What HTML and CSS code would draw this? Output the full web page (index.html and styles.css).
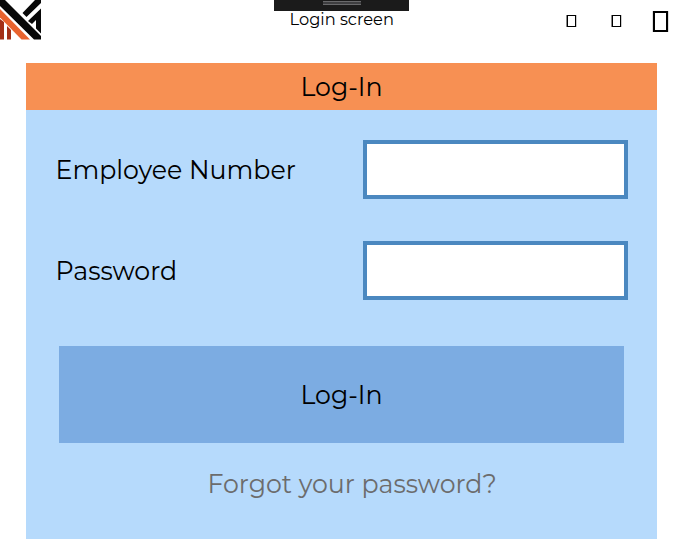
FILE: index.html
```html
<!DOCTYPE html>
<html lang="en">
<head>
<meta charset="utf-8">
<title>Login screen</title>
<link rel="stylesheet" href="styles.css">
</head>
<body>
<header class="titlebar">
  <svg class="logo" viewBox="0 0 42 40" aria-hidden="true">
    <path class="logo-rust" d="M0 19L4 22V39.500H0ZM7 26L11 30V39.500H7Z"/>
    <path class="logo-orange" d="M0 9L30 39.500H21.500L0 17.500Z"/>
    <path class="logo-black" d="M0 0H5L41 36V39.500H34L0 6ZM35 0H41V3L26.500 17L22.500 13ZM41 8.500V33.500L36 28.500V20L32 24L28 21Z"/>
  </svg>
  <div class="heading">
    <div class="grip"><span class="grip-lines"></span></div>
    <span class="heading-text">Login screen</span>
  </div>
  <div class="controls">
    <span class="glyph"></span>
    <span class="glyph"></span>
    <span class="glyph glyph-large"></span>
  </div>
</header>
<main class="panel">
  <h1 class="panel-title">Log-In</h1>
  <form class="form">
    <div class="row">
      <label for="number">Employee Number</label>
      <input class="field" id="number" type="text">
    </div>
    <div class="row">
      <label for="password">Password</label>
      <input class="field" id="password" type="password">
    </div>
    <button class="submit" type="button">Log-In</button>
    <a class="forgot">Forgot your password?</a>
  </form>
</main>
</body>
</html>
```
FILE: styles.css
```css
* { box-sizing: border-box; }
body {
  margin: 0;
  background: #fff;
  color: #000;
  font: 400 25.25px/30px Montserrat, Inter, sans-serif;
  overflow: hidden;
}
.titlebar {
  display: grid;
  grid-template-columns: 274px 135px 1fr;
  height: 63px;
}
.logo { width: 42px; height: 40px; }
.logo-rust { fill: #a32f17; }
.logo-orange { fill: #e9632e; }
.logo-black { fill: #080808; }
.heading { display: flex; flex-direction: column; }
.grip {
  display: flex;
  justify-content: center;
  height: 11px;
  background: #1b1b1b;
}
.grip-lines {
  width: 38px;
  height: 4px;
  margin-top: 1px;
  border: solid #69696b;
  border-width: 1px 0;
  background: #3e3e40;
}
.heading-text {
  margin: -1px 0 0 15.5px;
  font-size: 16.25px;
  line-height: 19px;
  white-space: nowrap;
}
.controls { display: flex; align-items: flex-start; padding-left: 158px; }
.glyph {
  width: 9px;
  height: 12px;
  margin: 15px 36px 0 0;
  border: 1px solid #000;
  box-shadow: -1px 0 #888, 1px 0 #ccc;
}
.glyph-large {
  width: 15px;
  height: 21px;
  margin: 11px 0 0 -4px;
  border-width: 2px;
  box-shadow: -1px 0 #ddd, 1px 0 #ddd;
}
.panel {
  width: 631px;
  height: 476px;
  margin-left: 26px;
  background: #b6dafc;
}
.panel-title {
  height: 47px;
  margin: 0;
  padding-top: 9px;
  background: #f79053;
  font: inherit;
  text-align: center;
}
.form { display: flex; flex-direction: column; padding: 30px 29px 0 29.5px; }
.row {
  display: flex;
  justify-content: space-between;
  align-items: center;
  height: 59px;
  margin-bottom: 42px;
}
.field {
  width: 265px;
  height: 59px;
  border: 4px solid #4b88c0;
  background: #fff;
  outline: 0;
}
.submit {
  width: 565px;
  height: 97px;
  margin: 4px 0 0 3.5px;
  padding: 0;
  border: 0;
  background: #7cace2;
  color: inherit;
  font: inherit;
}
.forgot {
  margin: 26px 0 0 152px;
  color: #6c6c6c;
  white-space: nowrap;
}
```
